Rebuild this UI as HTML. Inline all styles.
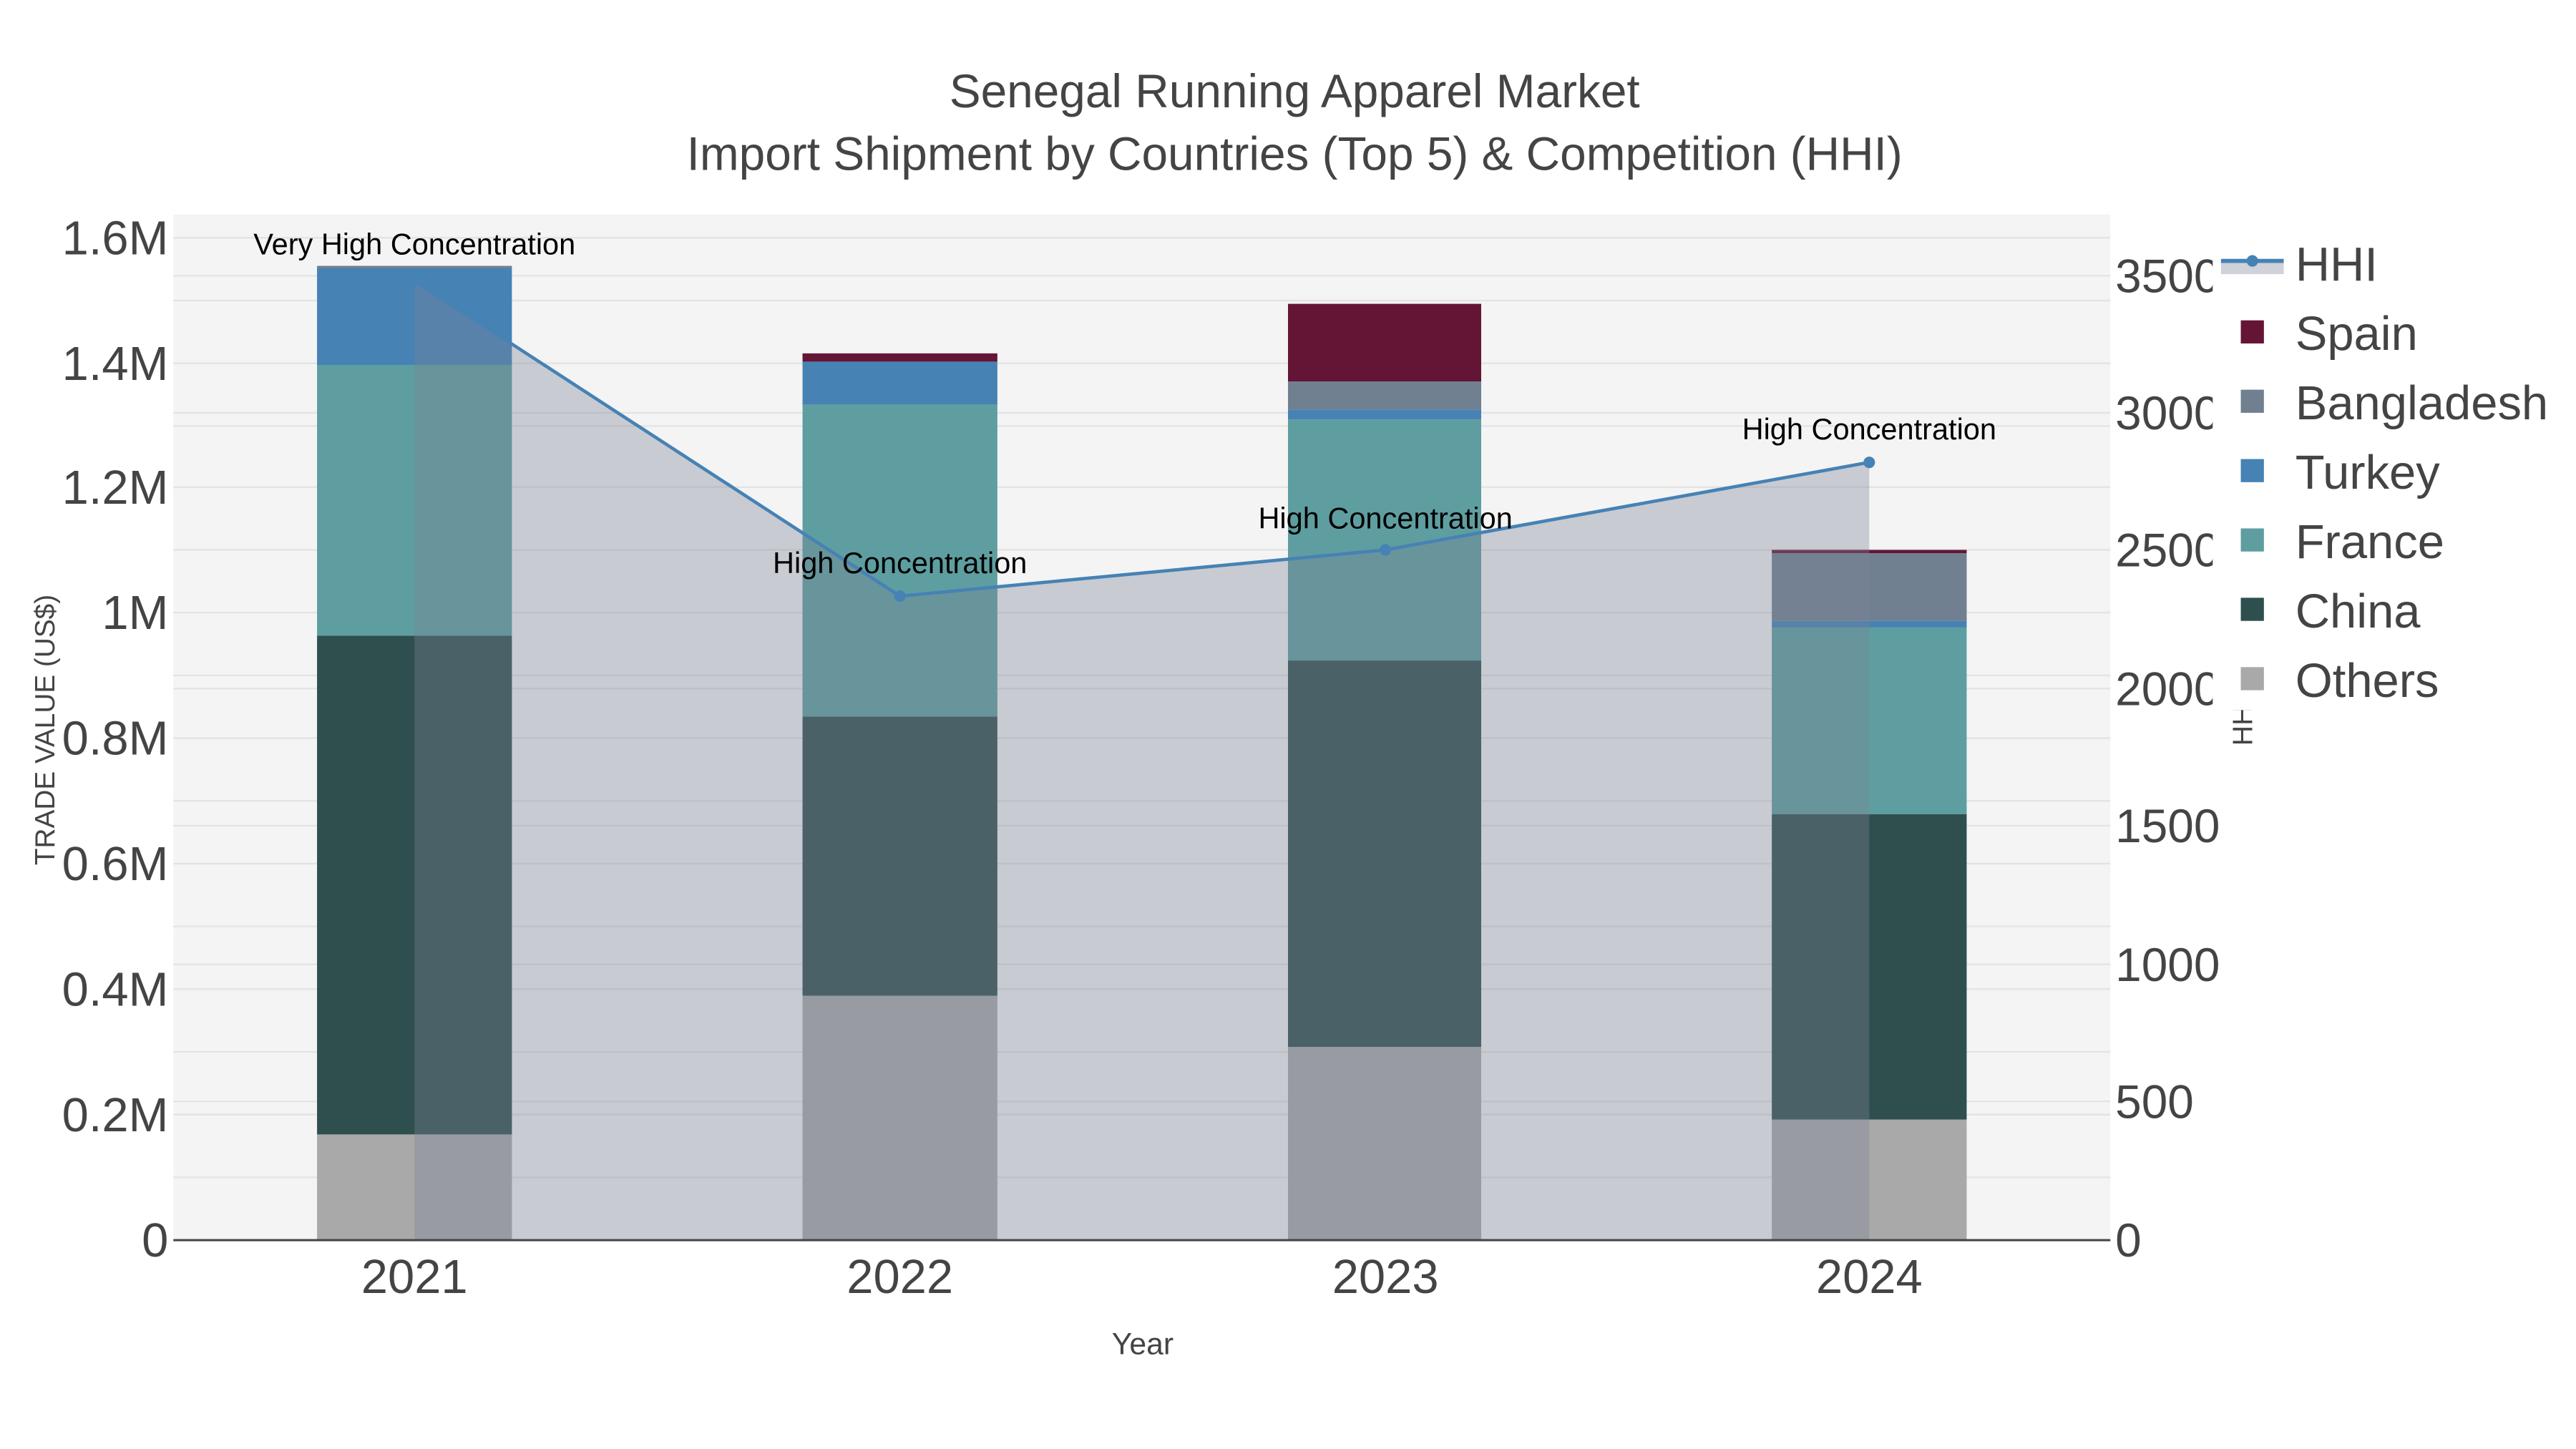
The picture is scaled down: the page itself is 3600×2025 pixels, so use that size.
<!DOCTYPE html>
<html><head><meta charset="utf-8"><style>
html,body{margin:0;padding:0;background:#fff;}
svg{display:block;}
text{font-family:"Liberation Sans",Arial,sans-serif;}
</style></head><body>
<svg width="3600" height="2025" viewBox="0 0 1560 877.5" xmlns="http://www.w3.org/2000/svg">
<rect width="1560" height="877.5" fill="#fff"/>
<rect x="105" y="130" width="1173" height="621" fill="#f4f4f4"/>
<g stroke="#e3e3e3" stroke-width="1">
<line x1="105" x2="1278" y1="713" y2="713"/><line x1="105" x2="1278" y1="675" y2="675"/>
<line x1="105" x2="1278" y1="637" y2="637"/><line x1="105" x2="1278" y1="599" y2="599"/>
<line x1="105" x2="1278" y1="561" y2="561"/><line x1="105" x2="1278" y1="523" y2="523"/>
<line x1="105" x2="1278" y1="485" y2="485"/><line x1="105" x2="1278" y1="447" y2="447"/>
<line x1="105" x2="1278" y1="409" y2="409"/><line x1="105" x2="1278" y1="371" y2="371"/>
<line x1="105" x2="1278" y1="333" y2="333"/><line x1="105" x2="1278" y1="295" y2="295"/>
<line x1="105" x2="1278" y1="258" y2="258"/><line x1="105" x2="1278" y1="220" y2="220"/>
<line x1="105" x2="1278" y1="182" y2="182"/><line x1="105" x2="1278" y1="144" y2="144"/>
<line x1="105" x2="1278" y1="667" y2="667"/><line x1="105" x2="1278" y1="584" y2="584"/>
<line x1="105" x2="1278" y1="500" y2="500"/><line x1="105" x2="1278" y1="417" y2="417"/>
<line x1="105" x2="1278" y1="250" y2="250"/><line x1="105" x2="1278" y1="167" y2="167"/>
</g>
<g>
<rect x="192" y="687" width="118" height="64" fill="#a9a9a9"/>
<rect x="192" y="385" width="118" height="302" fill="#2f4f4f"/>
<rect x="192" y="221" width="118" height="164" fill="#5f9ea0"/>
<rect x="192" y="162" width="118" height="59" fill="#4682b4"/>
<rect x="192" y="161" width="118" height="1.5" fill="#708090"/>

<rect x="486" y="603" width="118" height="148" fill="#a9a9a9"/>
<rect x="486" y="434" width="118" height="169" fill="#2f4f4f"/>
<rect x="486" y="245" width="118" height="189" fill="#5f9ea0"/>
<rect x="486" y="219" width="118" height="26" fill="#4682b4"/>
<rect x="486" y="214" width="118" height="5" fill="#641535"/>

<rect x="780" y="634" width="117" height="117" fill="#a9a9a9"/>
<rect x="780" y="400" width="117" height="234" fill="#2f4f4f"/>
<rect x="780" y="254" width="117" height="146" fill="#5f9ea0"/>
<rect x="780" y="248" width="117" height="6" fill="#4682b4"/>
<rect x="780" y="231" width="117" height="17" fill="#708090"/>
<rect x="780" y="184" width="117" height="47" fill="#641535"/>

<rect x="1073" y="678" width="118" height="73" fill="#a9a9a9"/>
<rect x="1073" y="493" width="118" height="185" fill="#2f4f4f"/>
<rect x="1073" y="380" width="118" height="113" fill="#5f9ea0"/>
<rect x="1073" y="376" width="118" height="4" fill="#4682b4"/>
<rect x="1073" y="335" width="118" height="41" fill="#708090"/>
<rect x="1073" y="333" width="118" height="2" fill="#641535"/>
</g>
<polygon points="251,751 251,170 545,361 839,333 1132,280 1132,751" fill="rgb(123,131,151)" fill-opacity="0.36"/>
<polyline points="251,170 545,361 839,333 1132,280" fill="none" stroke="#4682b4" stroke-width="2"/>
<g fill="#4682b4"><circle cx="251" cy="170" r="3.5"/><circle cx="545" cy="361" r="3.5"/><circle cx="839" cy="333" r="3.5"/><circle cx="1132" cy="280" r="3.5"/></g>
<line x1="105" x2="1278" y1="751" y2="751" stroke="#444" stroke-width="1.3"/>
<g font-size="18" fill="#000" text-anchor="middle">
<text x="251" y="154">Very High Concentration</text>
<text x="545" y="347">High Concentration</text>
<text x="839" y="320">High Concentration</text>
<text x="1132" y="266">High Concentration</text>
</g>
<g fill="#444" text-anchor="middle" font-size="28.5">
<text x="784" y="65">Senegal Running Apparel Market</text>
<text x="784" y="103">Import Shipment by Countries (Top 5) &amp; Competition (HHI)</text>
</g>
<g fill="#444" font-size="29" text-anchor="end">
<text x="102" y="761">0</text><text x="102" y="685">0.2M</text><text x="102" y="609">0.4M</text>
<text x="102" y="533">0.6M</text><text x="102" y="457">0.8M</text><text x="102" y="381">1M</text>
<text x="102" y="305">1.2M</text><text x="102" y="230">1.4M</text><text x="102" y="154">1.6M</text>
</g>
<g fill="#444" font-size="28.5">
<text x="1281" y="761">0</text><text x="1281" y="677">500</text><text x="1281" y="594">1000</text>
<text x="1281" y="510">1500</text><text x="1281" y="427">2000</text><text x="1281" y="343">2500</text>
<text x="1281" y="260">3000</text><text x="1281" y="177">3500</text>
</g>
<g fill="#444" font-size="29" text-anchor="middle">
<text x="251" y="783">2021</text><text x="545" y="783">2022</text><text x="839" y="783">2023</text><text x="1132" y="783">2024</text>
</g>
<text x="692" y="820" fill="#444" font-size="18.5" text-anchor="middle">Year</text>
<text transform="translate(33,442) rotate(-90)" fill="#444" font-size="16.8" text-anchor="middle">TRADE VALUE (US$)</text>
<text transform="translate(1364,437) rotate(-90)" fill="#444" font-size="17" text-anchor="middle">HHI</text>
<rect x="1340" y="140" width="220" height="290" fill="#fff"/>
<rect x="1345" y="159" width="38" height="7" fill="rgb(123,131,151)" fill-opacity="0.36"/>
<line x1="1345" x2="1383" y1="158" y2="158" stroke="#4682b4" stroke-width="2.5"/>
<circle cx="1364" cy="158" r="3.5" fill="#4682b4"/>
<g font-size="29" fill="#444">
<text x="1390" y="170">HHI</text>
<text x="1390" y="212">Spain</text>
<text x="1390" y="254">Bangladesh</text>
<text x="1390" y="296">Turkey</text>
<text x="1390" y="338">France</text>
<text x="1390" y="380">China</text>
<text x="1390" y="422">Others</text>
</g>
<rect x="1357" y="194" width="14" height="14" fill="#641535"/>
<rect x="1357" y="236" width="14" height="14" fill="#708090"/>
<rect x="1357" y="278" width="14" height="14" fill="#4682b4"/>
<rect x="1357" y="320" width="14" height="14" fill="#5f9ea0"/>
<rect x="1357" y="362" width="14" height="14" fill="#2f4f4f"/>
<rect x="1357" y="404" width="14" height="14" fill="#a9a9a9"/>
</svg>
</body></html>
